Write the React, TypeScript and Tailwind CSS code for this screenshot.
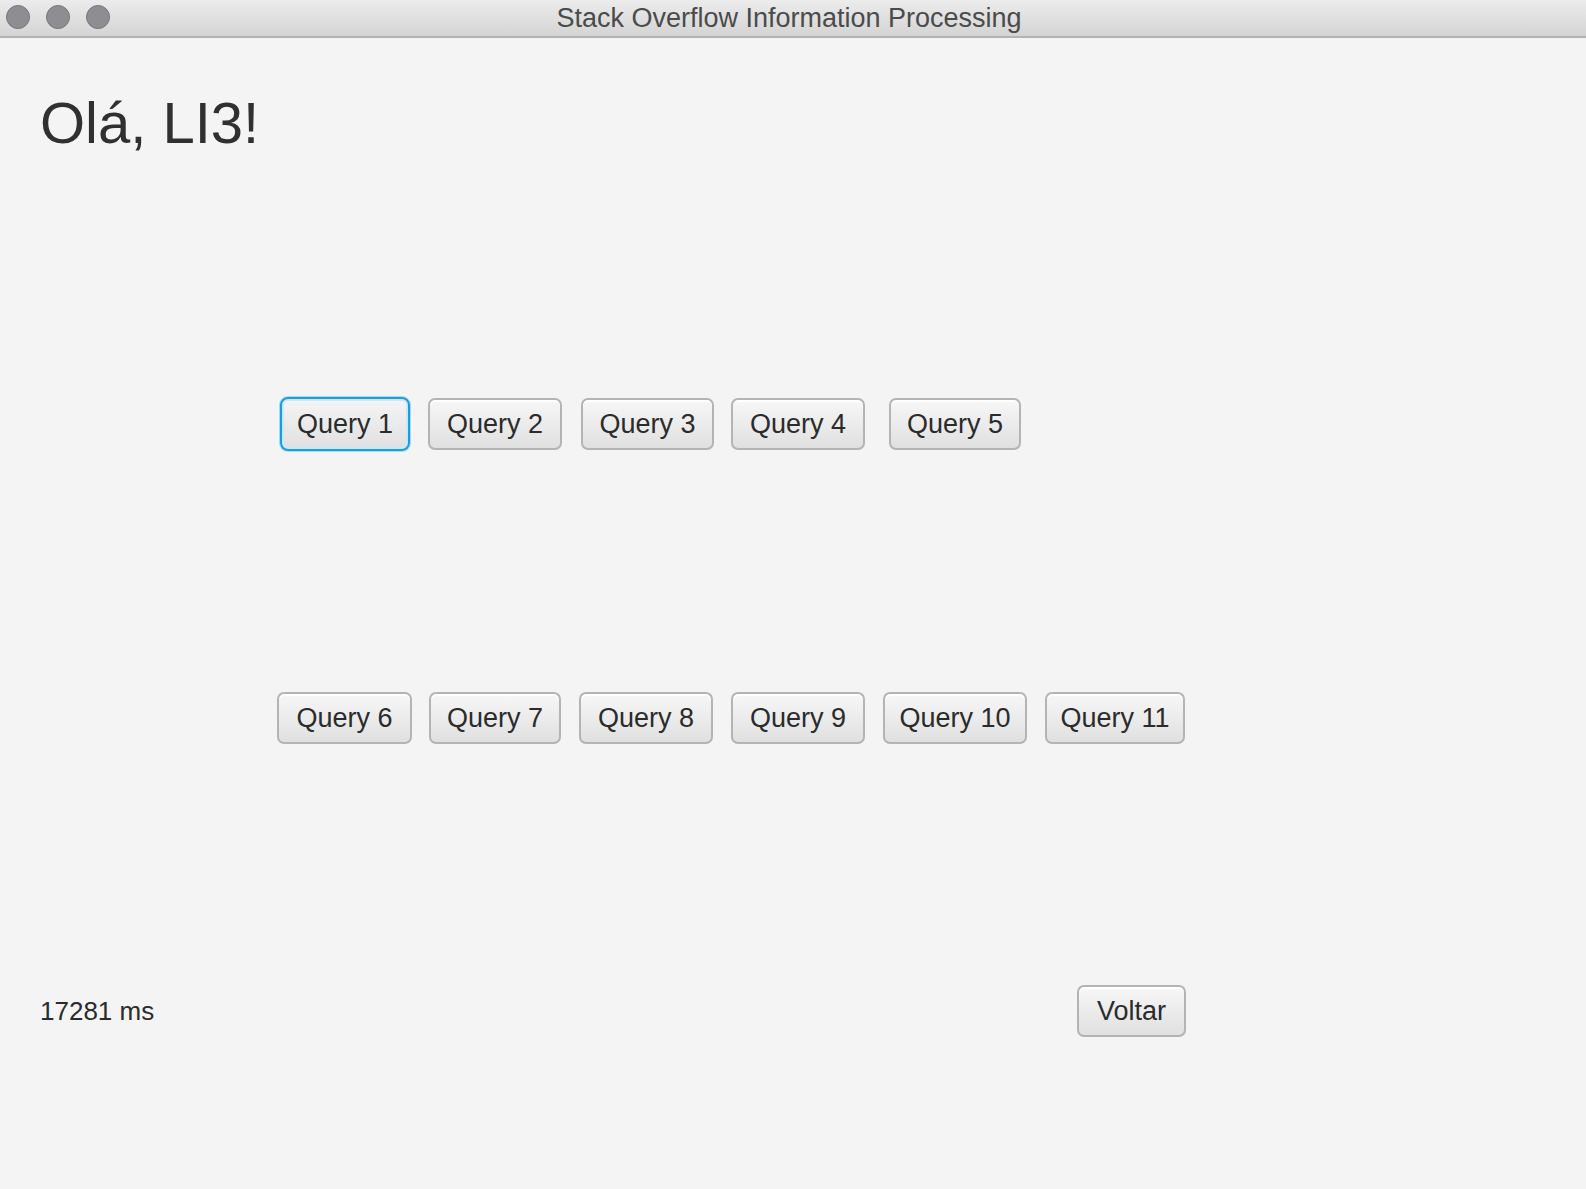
import React from 'react';

type Btn = { label: string; cls: string };

const row1: Btn[] = [
  { label: 'Query 2', cls: 'ml-[18px] w-[134px]' },
  { label: 'Query 3', cls: 'ml-[19px] w-[133px]' },
  { label: 'Query 4', cls: 'ml-[17px] w-[134px]' },
  { label: 'Query 5', cls: 'ml-[24px] w-[132px]' },
];

const row2: Btn[] = [
  { label: 'Query 6', cls: 'w-[135px]' },
  { label: 'Query 7', cls: 'ml-[17px] w-[132px]' },
  { label: 'Query 8', cls: 'ml-[18px] w-[134px]' },
  { label: 'Query 9', cls: 'ml-[18px] w-[134px]' },
  { label: 'Query 10', cls: 'ml-[18px] w-[144px]' },
  { label: 'Query 11', cls: 'ml-[18px] w-[140px]' },
];

const baseBtn =
  'h-[52px] flex items-center justify-center rounded-[7px] border-2 border-[#b4b4b4] bg-linear-to-b from-[#f7f7f7] to-[#e0e0e0] shadow-[inset_0_2px_0_#ffffff] text-[27px] text-[#2b2b2b] leading-none';

const FxButton: React.FC<{ label: string; cls: string }> = ({ label, cls }) => (
  <button type="button" className={`${baseBtn} ${cls}`}>
    {label}
  </button>
);

const App: React.FC = () => {
  return (
    <div
      className="min-h-screen w-full bg-[#f4f4f4] flex flex-col"
      style={{ fontFamily: '"Liberation Sans", Arial, sans-serif' }}
    >
      {/* window title bar */}
      <div className="relative h-[38px] flex items-center justify-center bg-linear-to-b from-[#ececec] to-[#d4d4d4] border-b-2 border-[#b3b3b3]">
        <div className="absolute left-[6px] top-[5px] flex gap-[16px]">
          <span className="w-[24px] h-[24px] rounded-full bg-[#8e8d92] border border-[#76757a]" />
          <span className="w-[24px] h-[24px] rounded-full bg-[#8e8d92] border border-[#76757a]" />
          <span className="w-[24px] h-[24px] rounded-full bg-[#8e8d92] border border-[#76757a]" />
        </div>
        <span className="text-[27px] text-[#4b4b4b] leading-none ml-[-8px]">
          Stack Overflow Information Processing
        </span>
      </div>

      <h1 className="mt-[56px] pl-[40px] text-[58px] leading-[58px] text-[#303030]">Olá, LI3!</h1>

      <div className="mt-[245px] pl-[280px] flex items-center">
        <button
          type="button"
          className="w-[130px] h-[54px] flex items-center justify-center rounded-[8px] border-2 border-[#1a9dd8] bg-linear-to-b from-[#f5f5f5] to-[#e0e0e0] shadow-[0_0_0_1px_#a9d7ee,inset_0_0_0_2px_#cde6f2] text-[27px] text-[#2b2b2b] leading-none"
        >
          Query 1
        </button>
        {row1.map(b => (
          <FxButton key={b.label} label={b.label} cls={b.cls} />
        ))}
      </div>

      <div className="mt-[241px] pl-[277px] flex items-center">
        {row2.map(b => (
          <FxButton key={b.label} label={b.label} cls={b.cls} />
        ))}
      </div>

      <div className="mt-[241px] pl-[40px] w-[1186px] flex items-center justify-between">
        <span className="text-[26px] text-[#2b2b2b] leading-none">17281 ms</span>
        <FxButton label="Voltar" cls="w-[109px]" />
      </div>
    </div>
  );
};

export default App;
